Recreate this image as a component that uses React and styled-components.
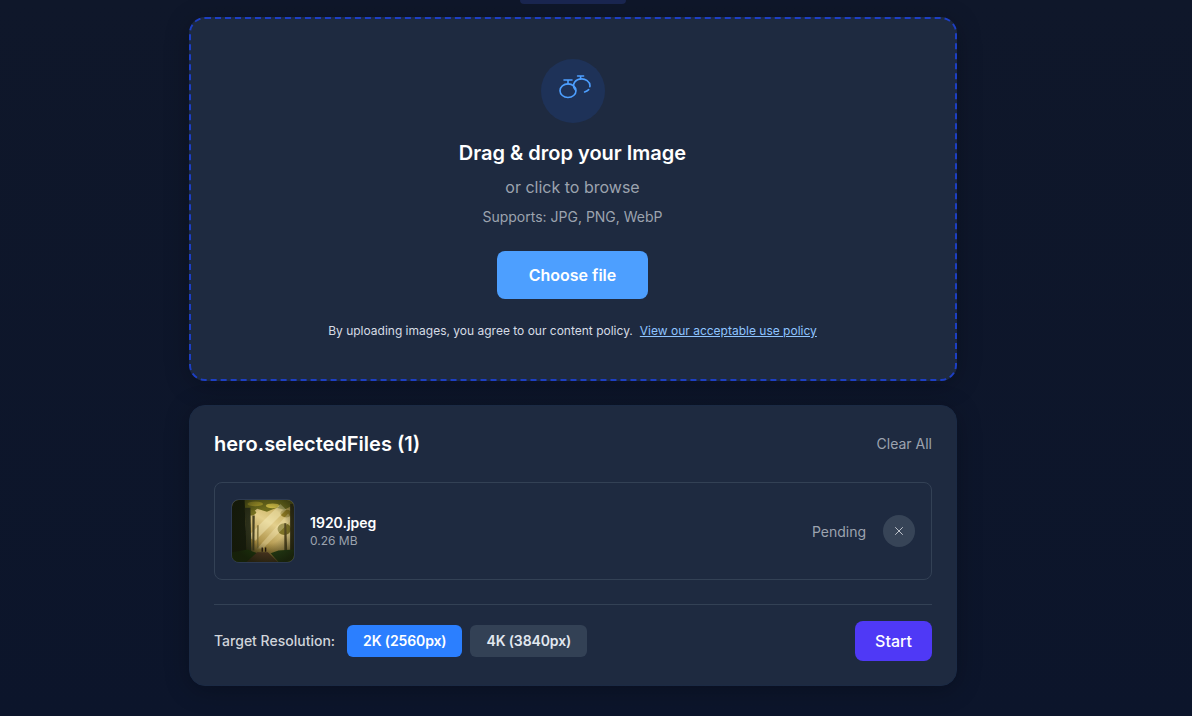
import React from "react";
import styled, { createGlobalStyle } from "styled-components";
import { X } from "lucide-react";

const GlobalStyle = createGlobalStyle`
  html, body {
    margin: 0;
    height: 100%;
    overflow: hidden;
    background: #0f172a;
    font-family: Inter, "Liberation Sans", sans-serif;
    -webkit-font-smoothing: antialiased;
  }
`;

const Page = styled.div`
  box-sizing: border-box;
  height: 716px;
  padding-right: 46px;
  overflow: hidden;
  background: linear-gradient(180deg, #0f172a 0%, #0c152b 100%);
  display: flex;
  flex-direction: column;
  align-items: center;
`;

const TopTab = styled.div`
  width: 106px;
  height: 4px;
  flex: none;
  background: #1a2650;
  border-radius: 0 0 12px 12px;
  margin-bottom: 13px;
`;

const Column = styled.main`
  width: 768px;
  display: flex;
  flex-direction: column;
  gap: 24px;
`;

const DropZone = styled.section`
  box-sizing: border-box;
  height: 364px;
  padding-top: 40px;
  display: flex;
  flex-direction: column;
  align-items: center;
  background: #1e2a40;
  border: 2px dashed #1d3fc4;
  border-radius: 16px;
  box-shadow: 0 4px 24px rgba(0, 0, 0, 0.25);
`;

const IconCircle = styled.div`
  width: 64px;
  height: 64px;
  border-radius: 50%;
  background: #1e3258;
  display: flex;
  align-items: center;
  justify-content: center;
  color: #4d9fff;
`;

const Heading = styled.h2`
  margin: 15px 1px 0 0;
  font-size: 20px;
  line-height: 30px;
  font-weight: 600;
  color: #ffffff;
`;

const Browse = styled.p`
  margin: 7px 1px 0 0;
  font-size: 16px;
  line-height: 24px;
  color: #9ca3af;
`;

const Supports = styled.p`
  margin: 7px 1px 0 0;
  font-size: 14px;
  line-height: 21px;
  color: #9ca3af;
`;

const ChooseButton = styled.button`
  margin: 24px 1px 0 0;
  width: 151px;
  height: 48px;
  border: 0;
  border-radius: 8px;
  background: #4d9fff;
  color: #ffffff;
  font: 600 16px Inter, "Liberation Sans", sans-serif;
`;

const Policy = styled.p`
  margin: 23px 1px 0 0;
  font-size: 12px;
  line-height: 18px;
  color: #d6dce5;
`;

const PolicyLink = styled.a`
  margin-left: 7px;
  color: #8fc4ff;
  text-decoration: underline;
`;

const FilesCard = styled.section`
  box-sizing: border-box;
  height: 281px;
  padding: 24px;
  background: #1e2a40;
  border: 1px solid #1b2a44;
  border-radius: 16px;
  box-shadow: 0 4px 24px rgba(0, 0, 0, 0.25);
`;

const CardHeader = styled.div`
  height: 28px;
  margin-bottom: 24px;
  display: flex;
  align-items: center;
  justify-content: space-between;
`;

const CardTitle = styled.h3`
  margin: 0;
  font-size: 20px;
  font-weight: 600;
  color: #ffffff;
`;

const ClearAll = styled.button`
  padding: 0 0 2px;
  border: 0;
  background: none;
  color: #9ca3af;
  font: 400 14px Inter, "Liberation Sans", sans-serif;
`;

const FileRow = styled.div`
  box-sizing: border-box;
  height: 98px;
  padding: 0 16px;
  display: flex;
  align-items: center;
  border: 1px solid #334155;
  border-radius: 8px;
`;

const Thumb = styled.svg`
  box-sizing: border-box;
  width: 64px;
  height: 64px;
  flex: none;
  border: 1px solid #2d3a50;
  border-radius: 8px;
  display: block;
`;

const FileInfo = styled.div`
  margin-left: 15px;
  padding-bottom: 2px;
  flex: 1;
  display: flex;
  flex-direction: column;
`;

const FileName = styled.span`
  font-size: 14px;
  line-height: 21px;
  font-weight: 600;
  color: #ffffff;
`;

const FileSize = styled.span`
  font-size: 12px;
  line-height: 16px;
  color: #9ca3af;
`;

const Status = styled.span`
  margin-right: 17px;
  font-size: 14px;
  color: #9ca3af;
`;

const RemoveButton = styled.button`
  width: 32px;
  height: 32px;
  padding: 0;
  border: 0;
  border-radius: 50%;
  background: #374457;
  color: #d1d5db;
  display: flex;
  align-items: center;
  justify-content: center;
`;

const Footer = styled.div`
  margin-top: 24px;
  padding-top: 16px;
  border-top: 1px solid #334155;
  display: flex;
  align-items: center;
`;

const ResLabel = styled.span`
  margin-right: 12px;
  padding-bottom: 2px;
  font-size: 14px;
  font-weight: 500;
  color: #d1d5db;
`;

const ResOption = styled.button`
  height: 32px;
  padding: 0 16px 2px;
  margin-right: 8px;
  border: 0;
  border-radius: 6px;
  background: ${p => (p.$active ? "#2b7fff" : "#334155")};
  color: ${p => (p.$active ? "#ffffff" : "#e2e8f0")};
  font: 600 14px Inter, "Liberation Sans", sans-serif;
  letter-spacing: -0.12px;
`;

const StartButton = styled.button`
  margin-left: auto;
  width: 77px;
  height: 40px;
  border: 0;
  border-radius: 8px;
  background: #4f39f6;
  color: #ffffff;
  font: 500 16px Inter, "Liberation Sans", sans-serif;
`;

const RingsIcon = () => (
  <svg width="36" height="32" viewBox="-2 1 36 32" fill="none" stroke="currentColor" strokeWidth="1.6" strokeLinecap="round">
    <ellipse cx="11" cy="16.7" rx="8" ry="6.8" />
    <path d="M11 9.9V6M7 6h8" />
    <path d="M18.4 16A8.2 6.8 0 1 1 32.87 12.6" />
    <path d="M31.7 15.6A8.2 6.8 0 0 1 27.6 18" />
    <path d="M23.6 5V2M20.6 2h6" />
  </svg>
);

const ForestThumb = () => (
  <Thumb viewBox="0 0 64 64" preserveAspectRatio="none">
    <defs>
      <linearGradient id="haze" x1="0.85" y1="0" x2="0.3" y2="1">
        <stop offset="0" stopColor="#b89f48" />
        <stop offset="0.38" stopColor="#e3cf8c" />
        <stop offset="0.72" stopColor="#a88c42" />
        <stop offset="1" stopColor="#4a4019" />
      </linearGradient>
      <radialGradient id="vignette" cx="0.58" cy="0.42" r="0.62">
        <stop offset="0.45" stopColor="#141808" stopOpacity="0" />
        <stop offset="1" stopColor="#141808" stopOpacity="0.75" />
      </radialGradient>
      <filter id="soft" x="-10%" y="-10%" width="120%" height="120%">
        <feGaussianBlur stdDeviation="0.8" />
      </filter>
    </defs>
    <rect width="64" height="64" fill="url(#haze)" />
    <g filter="url(#soft)">
      <path d="M0 0h64v5l-10 5-8-2-10 4-10-3-10 8-16 4z" fill="#6e6c1e" />
      <ellipse cx="24" cy="4" rx="8" ry="2.5" fill="#a89a2c" />
      <ellipse cx="42" cy="6" rx="7" ry="2.5" fill="#cdbb44" />
      <ellipse cx="56" cy="14" rx="6" ry="4" fill="#8f7a24" />
      <ellipse cx="18" cy="13" rx="7" ry="3" fill="#7a7420" />
      <ellipse cx="54" cy="30" rx="7" ry="6" fill="#7d7226" />
      <path d="M50 4L16 38l8 4L56 10z" fill="#fbf2c6" opacity="0.4" />
      <path d="M58 14L26 50l6 0L62 20z" fill="#fbf2c6" opacity="0.3" />
      <path d="M0 0h13l3 64H0z" fill="#161c0e" />
      <path d="M13 8h6l1 46h-5z" fill="#2f311a" />
      <path d="M21 16h2.5l-.5 36h-2z" fill="#4a4322" />
      <path d="M26 26h1.5l-.2 24h-1.4z" fill="#7a6c36" />
      <path d="M60 4h4v60h-4z" fill="#332f16" />
      <path d="M54 24h2l1 30h-3z" fill="#554822" />
      <path d="M0 54l16-3 10 4-10 9H0z" fill="#1d3a0e" />
      <path d="M64 51l-16 1-8 3 8 9h16z" fill="#264212" />
      <path d="M26 54h11l10 10H15z" fill="#5a3c26" />
    </g>
    <rect width="64" height="64" fill="url(#vignette)" />
    <path d="M30.5 49h1.4v4.5h-1.4zM34 49h1.4v4.5H34z" fill="#20150c" />
  </Thumb>
);

export default function App() {
  return (
    <Page>
      <GlobalStyle />
      <TopTab />
      <Column>
        <DropZone>
          <IconCircle>
            <RingsIcon />
          </IconCircle>
          <Heading>Drag &amp; drop your Image</Heading>
          <Browse>or click to browse</Browse>
          <Supports>Supports: JPG, PNG, WebP</Supports>
          <ChooseButton>Choose file</ChooseButton>
          <Policy>
            By uploading images, you agree to our content policy.
            <PolicyLink href="#">View our acceptable use policy</PolicyLink>
          </Policy>
        </DropZone>
        <FilesCard>
          <CardHeader>
            <CardTitle>hero.selectedFiles (1)</CardTitle>
            <ClearAll>Clear All</ClearAll>
          </CardHeader>
          <FileRow>
            <ForestThumb />
            <FileInfo>
              <FileName>1920.jpeg</FileName>
              <FileSize>0.26 MB</FileSize>
            </FileInfo>
            <Status>Pending</Status>
            <RemoveButton>
              <X size={14} strokeWidth={1.5} />
            </RemoveButton>
          </FileRow>
          <Footer>
            <ResLabel>Target Resolution:</ResLabel>
            <ResOption $active>2K (2560px)</ResOption>
            <ResOption>4K (3840px)</ResOption>
            <StartButton>Start</StartButton>
          </Footer>
        </FilesCard>
      </Column>
    </Page>
  );
}
